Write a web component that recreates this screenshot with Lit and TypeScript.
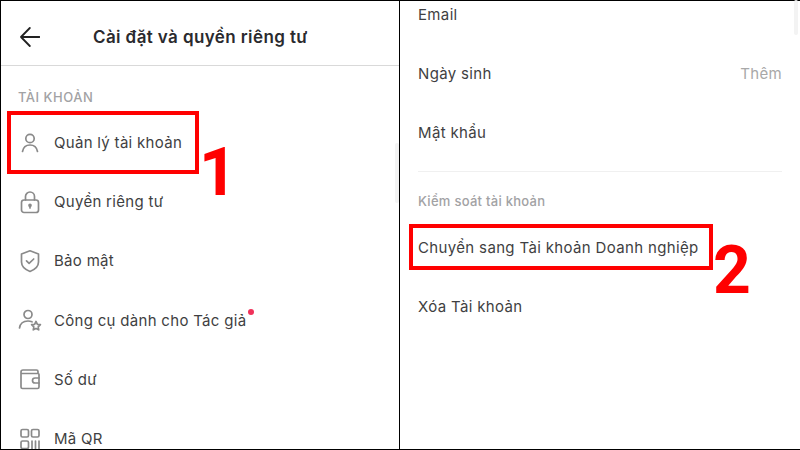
import { LitElement, html, css, svg } from "lit";
import { customElement } from "lit/decorators.js";

const icons: Record<string, unknown> = {
  user: svg`<circle cx="12" cy="7.500" r="4.200"/><path d="M4.500 20.500c.8-4.400 3.600-6.500 7.500-6.500s6.700 2.100 7.500 6.500"/>`,
  lock: svg`<rect x="3.500" y="10" width="17" height="12.500" rx="2.500"/><path d="M7.500 10V6.500a4.500 4.500 0 0 1 9 0V10"/><path d="M12 18v-2.500" /><circle cx="12" cy="15.300" r="1" fill="#8a8a8a"/>`,
  shield: svg`<path d="M12 1.800 20.500 5v8c0 4.500-3.500 7.500-8.500 9.500C7 20.500 3.500 17.500 3.500 13V5z"/><path d="m8.500 11.800 2.600 2.500 4.600-4.300"/>`,
  creator: svg`<circle cx="10" cy="6.500" r="4"/><path d="M1.500 20c.7-4.500 3.800-7 8.500-7 1.500 0 2.800.3 4 .8"/><path d="m18 13.500 1.400 2.800 3 .4-2.200 2.100.5 3-2.700-1.400-2.700 1.400.5-3-2.200-2.100 3-.4z"/>`,
  wallet: svg`<path d="M20 6.500V4.500a1.500 1.500 0 0 0-1.500-1.500H5A2 2 0 0 0 3 5v15a1.500 1.500 0 0 0 1.500 1.500h15a1.500 1.500 0 0 0 1.500-1.500V7.500a1 1 0 0 0-1-1H3"/><path d="M21 11h-4a2.500 2.500 0 0 0 0 5h4"/>`,
  qr: svg`<rect x="3" y="2.500" width="7.500" height="7.500" rx="1.500"/><rect x="13.500" y="2.500" width="7.500" height="7.500" rx="1.500"/><rect x="3" y="14" width="7.500" height="7.500" rx="1.500"/><path d="M14 14v8M17.500 14v8M21 14v8"/>`,
};

const menu = [
  { icon: "user", label: "Quản lý tài khoản" },
  { icon: "lock", label: "Quyền riêng tư" },
  { icon: "shield", label: "Bảo mật" },
  { icon: "creator", label: "Công cụ dành cho Tác giả", dot: true },
  { icon: "wallet", label: "Số dư" },
  { icon: "qr", label: "Mã QR" },
];

@customElement("app-root")
export class AppRoot extends LitElement {
  static styles = css`
    :host {
      display: block;
      width: 800px;
      height: 450px;
      overflow: hidden;
      font-family: Inter, "Noto Sans", sans-serif;
      color: #3f3f42;
    }
    .frame {
      position: relative;
      display: grid;
      grid-template-columns: 400px 400px;
      width: 800px;
      height: 450px;
      background: #fff;
      overflow: hidden;
    }
    .pane {
      position: relative;
      height: 450px;
      overflow: hidden;
      box-sizing: border-box;
      border-top: 1px solid #000;
      border-bottom: 1px solid #000;
    }
    .left { border-left: 1px solid #000; border-right: 1px solid #000; }
    .header {
      height: 65px;
      box-sizing: border-box;
      display: flex;
      align-items: center;
      padding: 8px 0 0 19px;
      border-bottom: 1px solid #d9d9d9;
    }
    .back { width: 20px; height: 20px; flex: none; }
    .title {
      margin-left: 53px;
      font-size: 17px;
      letter-spacing: 0.4px;
      font-weight: 600;
      color: #2a2a2e;
      white-space: nowrap;
    }
    .section {
      padding: 23px 0 0 17px;
      height: 16px;
      line-height: 16px;
      font-size: 13px;
      letter-spacing: 0.5px;
      font-weight: 500;
      color: #a2a2a4;
    }
    .rows { display: flex; flex-direction: column; padding-top: 8px; }
    .row {
      height: 59.200px;
      flex: none;
      display: flex;
      align-items: center;
      padding-left: 17px;
      font-size: 15px;
      letter-spacing: 0.3px;
      white-space: nowrap;
    }
    .row svg {
      width: 24px;
      height: 24px;
      flex: none;
      margin-right: 12px;
      fill: none;
      stroke: #8a8a8a;
      stroke-width: 1.700;
      stroke-linecap: round;
      stroke-linejoin: round;
    }
    .label { position: relative; }
    .dot {
      position: absolute;
      right: -8px;
      top: -2px;
      width: 6px;
      height: 6px;
      border-radius: 50%;
      background: #f0325a;
    }
    .right { padding: 0 18px; }
    .line {
      height: 59px;
      display: flex;
      align-items: center;
      justify-content: space-between;
      font-size: 15px;
      letter-spacing: 0.35px;
      white-space: nowrap;
    }
    .first { margin-top: -16px; }
    .more { color: #a8a8a8; }
    .divider { height: 1px; background: #f0f0f0; margin-top: 8.500px; }
    .sub {
      margin-top: 20px;
      height: 18px;
      line-height: 18px;
      font-size: 13px;
      letter-spacing: 0.27px;
      font-weight: 500;
      color: #a2a2a4;
    }
    .sub + .line { margin-top: 8px; }
    .mark {
      position: absolute;
      box-sizing: border-box;
      border: 4px solid #ff0000;
    }
    .m1 { left: 7px; top: 111px; width: 192px; height: 63px; }
    .m2 { left: 409px; top: 224px; width: 304px; height: 46px; }
    .num {
      position: absolute;
      font-family: Roboto, "Liberation Sans", sans-serif;
      font-weight: 700;
      font-size: 66px;
      line-height: 66px;
      color: #ff0000;
    }
    .n1 { left: 199px; top: 140px; }
    .n2 { left: 713px; top: 238px; }
    .scroll {
      position: absolute;
      width: 4px;
      border-radius: 2px;
      background: #f3f3f3;
    }
    .s1 { left: 794px; top: 0; height: 35px; }
    .s2 { left: 395px; top: 143px; height: 60px; }
  `;

  render() {
    return html`<div class="frame">
      <div class="pane left">
        <div class="header">
          <svg class="back" viewBox="0 0 20 20" fill="none" stroke="#222" stroke-width="1.800" stroke-linecap="round" stroke-linejoin="round"><path d="M19.500 10H1M9.800 1 1 10l8.800 9"/></svg>
          <div class="title">Cài đặt và quyền riêng tư</div>
        </div>
        <div class="section">TÀI KHOẢN</div>
        <div class="rows">
          ${menu.map(
            (m) => html`<div class="row">
              <svg viewBox="0 0 24 24">${icons[m.icon]}</svg>
              <span class="label">${m.label}${m.dot ? html`<span class="dot"></span>` : ""}</span>
            </div>`
          )}
        </div>
      </div>
      <div class="pane right">
        <div class="line first"><span>Email</span></div>
        <div class="line"><span>Ngày sinh</span><span class="more">Thêm</span></div>
        <div class="line"><span>Mật khẩu</span></div>
        <div class="divider"></div>
        <div class="sub">Kiểm soát tài khoản</div>
        <div class="line"><span>Chuyển sang Tài khoản Doanh nghiệp</span></div>
        <div class="line"><span>Xóa Tài khoản</span></div>
      </div>
      <div class="scroll s1"></div>
      <div class="scroll s2"></div>
      <div class="mark m1"></div>
      <div class="num n1">1</div>
      <div class="mark m2"></div>
      <div class="num n2">2</div>
    </div>`;
  }
}
